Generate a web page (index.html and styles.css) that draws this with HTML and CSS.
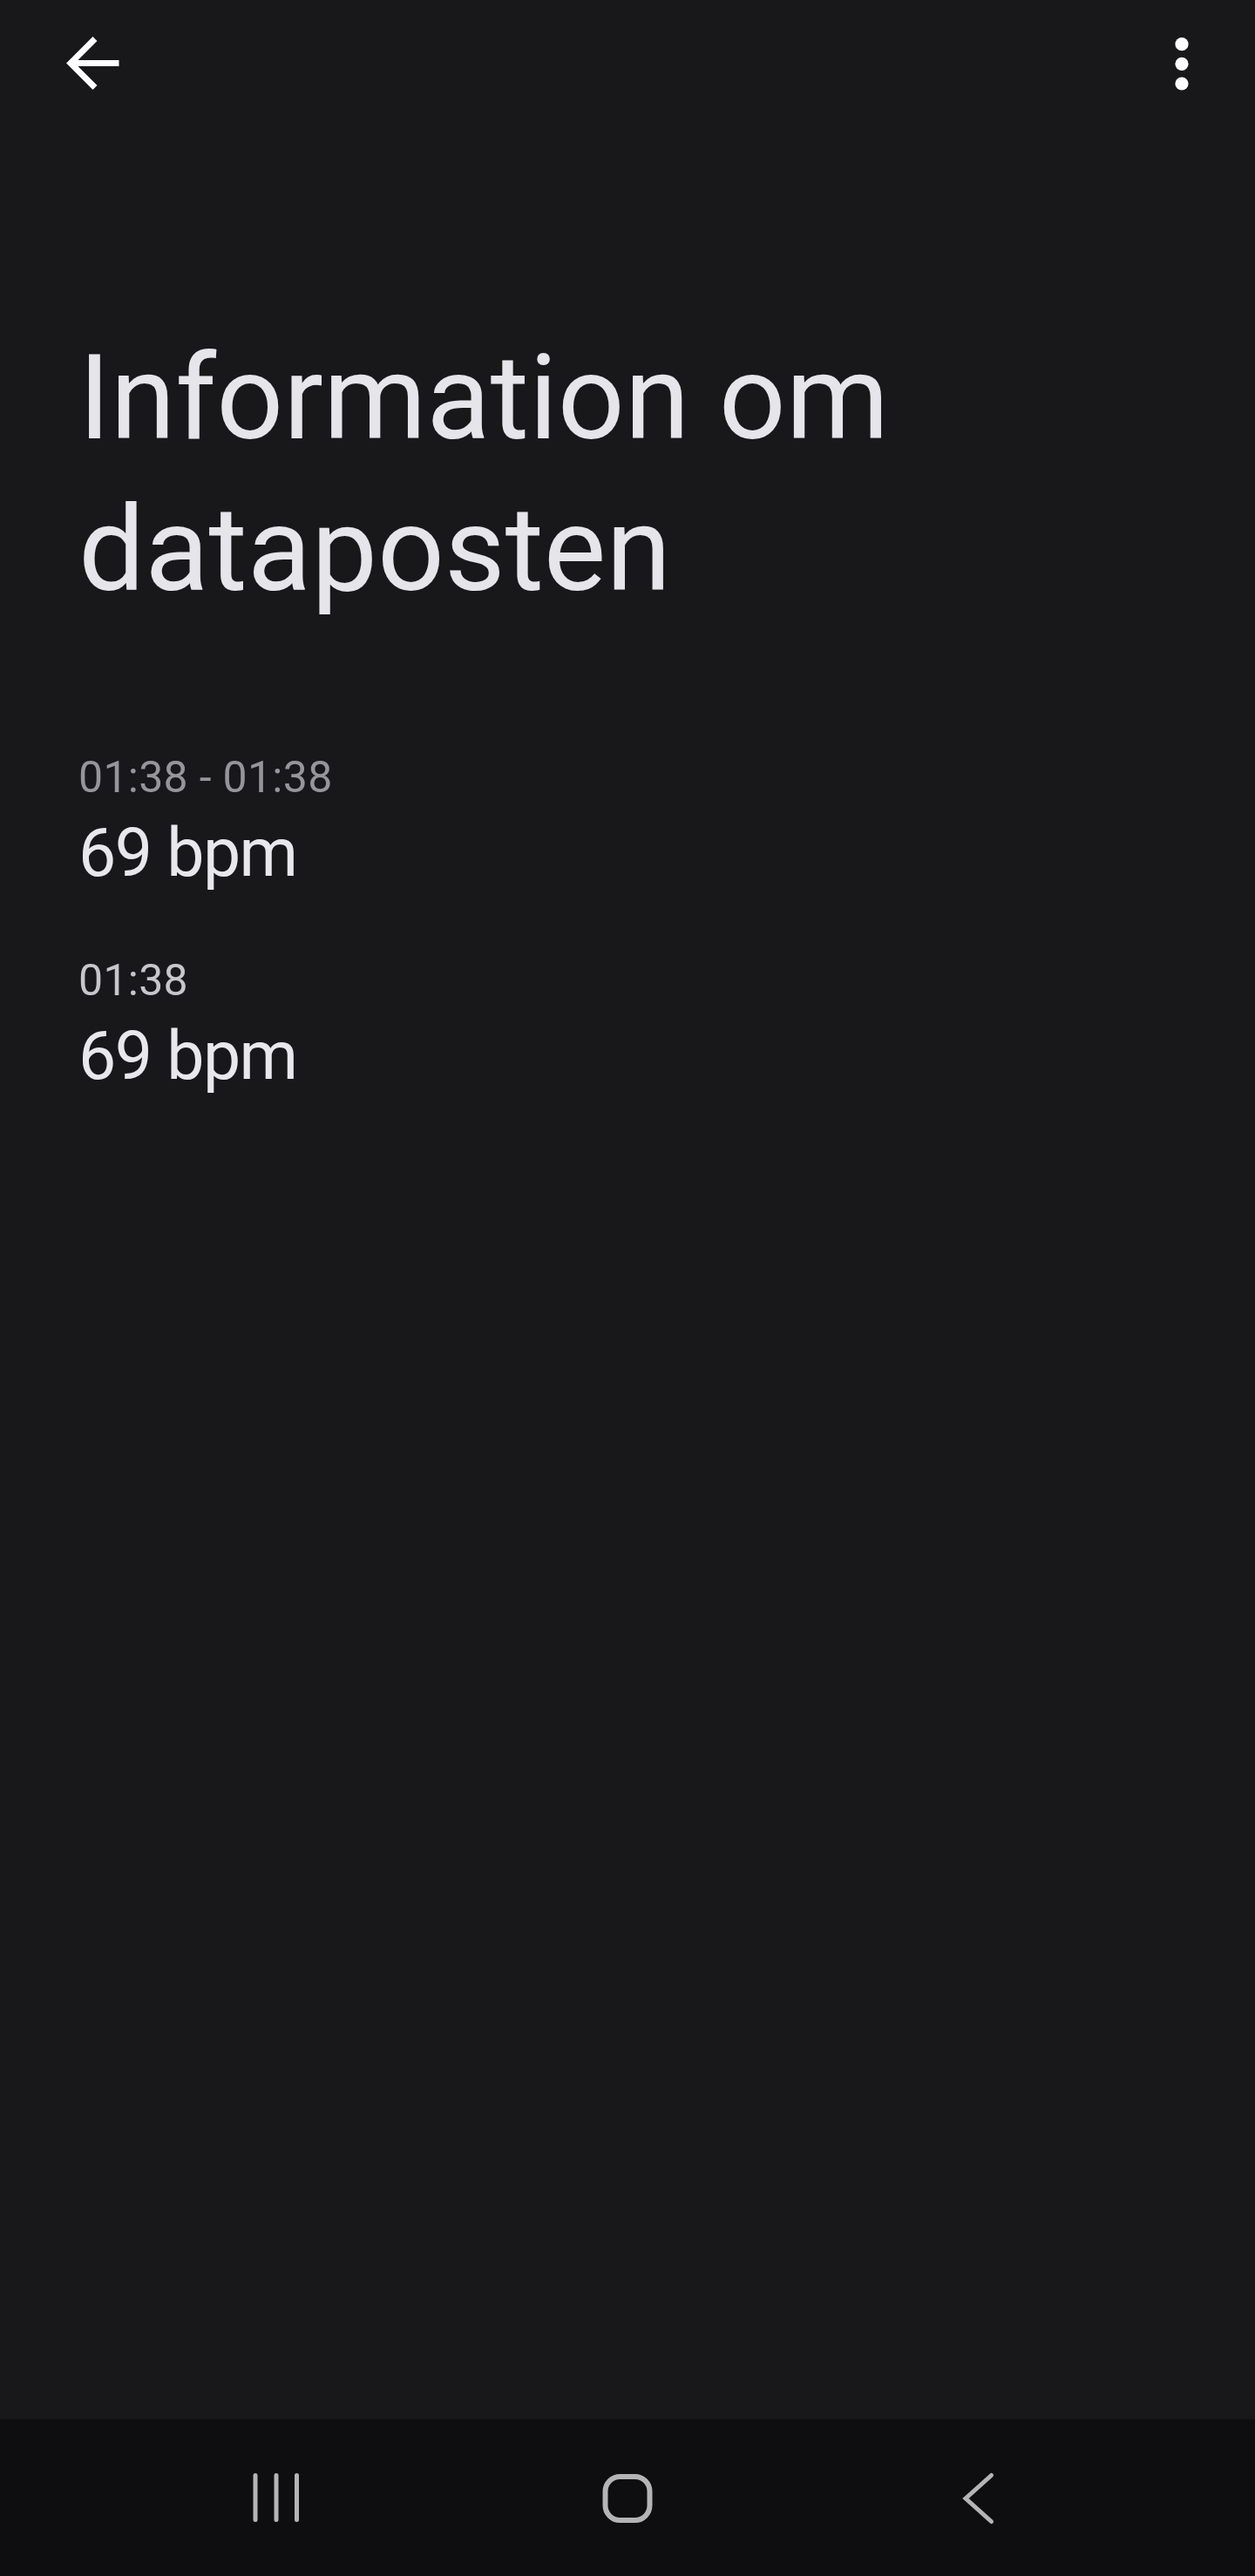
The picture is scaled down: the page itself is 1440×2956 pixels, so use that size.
FILE: index.html
```html
<!DOCTYPE html>
<html lang="da">
<head>
<meta charset="utf-8">
<title>Information om dataposten</title>
<link rel="stylesheet" href="styles.css">
</head>
<body>
<div class="screen">
  <header class="appbar">
    <button class="icon-btn back-btn" aria-label="Tilbage">
      <svg width="96" height="96" viewBox="0 0 96 96">
        <path d="M75 47.5 H25" class="stroke-white"/>
        <path d="M48.5 22 L23 47.5 L48.5 73" class="stroke-white"/>
      </svg>
    </button>
    <button class="icon-btn menu-btn" aria-label="Flere indstillinger">
      <svg width="96" height="96" viewBox="0 0 96 96">
        <circle cx="48" cy="25.7" r="7.6" class="fill-white"/>
        <circle cx="48" cy="48.3" r="7.6" class="fill-white"/>
        <circle cx="48" cy="71" r="7.6" class="fill-white"/>
      </svg>
    </button>
  </header>

  <main class="content">
    <h1 class="title">Information om dataposten</h1>
    <section class="records">
      <div class="record">
        <div class="record-time time-dim">01:38 - 01:38</div>
        <div class="record-value">69 bpm</div>
      </div>
      <div class="record">
        <div class="record-time time-light">01:38</div>
        <div class="record-value">69 bpm</div>
      </div>
    </section>
  </main>

  <nav class="navbar">
    <button class="nav-btn" aria-label="Seneste">
      <svg width="120" height="120" viewBox="0 0 120 120">
        <path d="M36 34.5 V85.5 M60 34.5 V85.5 M83.5 34.5 V85.5" class="nav-stroke"/>
      </svg>
    </button>
    <button class="nav-btn" aria-label="Start">
      <svg width="120" height="120" viewBox="0 0 120 120">
        <rect x="34.5" y="36" width="51" height="50" rx="17" class="nav-stroke home"/>
      </svg>
    </button>
    <button class="nav-btn" aria-label="Tilbage">
      <svg width="120" height="120" viewBox="0 0 120 120">
        <path d="M74.5 34.5 L45 61 L74.5 87.5" class="nav-stroke"/>
      </svg>
    </button>
  </nav>
</div>
</body>
</html>
```

FILE: styles.css
```css
* {
  box-sizing: border-box;
}

html, body {
  margin: 0;
  padding: 0;
  background: #18181a;
}

body {
  font-family: Roboto, "Noto Sans", "Liberation Sans", sans-serif;
  color: #e5e5ea;
}

.screen {
  display: flex;
  flex-direction: column;
  width: 1440px;
  min-height: 2956px;
}

.appbar {
  display: flex;
  justify-content: space-between;
  align-items: flex-start;
  height: 146px;
  padding: 25px 36px 0 58px;
}

.icon-btn {
  width: 96px;
  height: 96px;
  padding: 0;
  border: 0;
  background: none;
  display: block;
}

.icon-btn svg {
  display: block;
}

.stroke-white {
  fill: none;
  stroke: #ffffff;
  stroke-width: 7;
  stroke-linecap: square;
  stroke-linejoin: miter;
}

.fill-white {
  fill: #ffffff;
}

.content {
  flex: 1;
  padding: 224px 90px 0 90px;
}

.title {
  margin: 0;
  font-size: 135px;
  line-height: 174px;
  font-weight: 400;
  color: #e5e5ea;
  max-width: 1100px;
}

.records {
  display: flex;
  flex-direction: column;
  gap: 71px;
  margin-top: 144px;
}

.record {
  display: flex;
  flex-direction: column;
  gap: 12px;
}

.record-time {
  font-size: 50px;
  line-height: 60px;
  letter-spacing: 0.3px;
}

.time-dim {
  color: #96969a;
}

.time-light {
  color: #c6c6cb;
}

.record-value {
  font-size: 77px;
  line-height: 90px;
  letter-spacing: -1.5px;
  color: #e8e8ec;
}

.navbar {
  height: 180px;
  background: #0e0e10;
  display: flex;
  justify-content: center;
  align-items: center;
  gap: 283px;
}

.nav-btn {
  width: 120px;
  height: 120px;
  padding: 0;
  border: 0;
  background: none;
  display: block;
}

.nav-btn svg {
  display: block;
}

.nav-stroke {
  fill: none;
  stroke: #b4b4b7;
  stroke-width: 5;
  stroke-linecap: round;
  stroke-linejoin: miter;
}

.nav-stroke.home {
  stroke-width: 6;
}
```
